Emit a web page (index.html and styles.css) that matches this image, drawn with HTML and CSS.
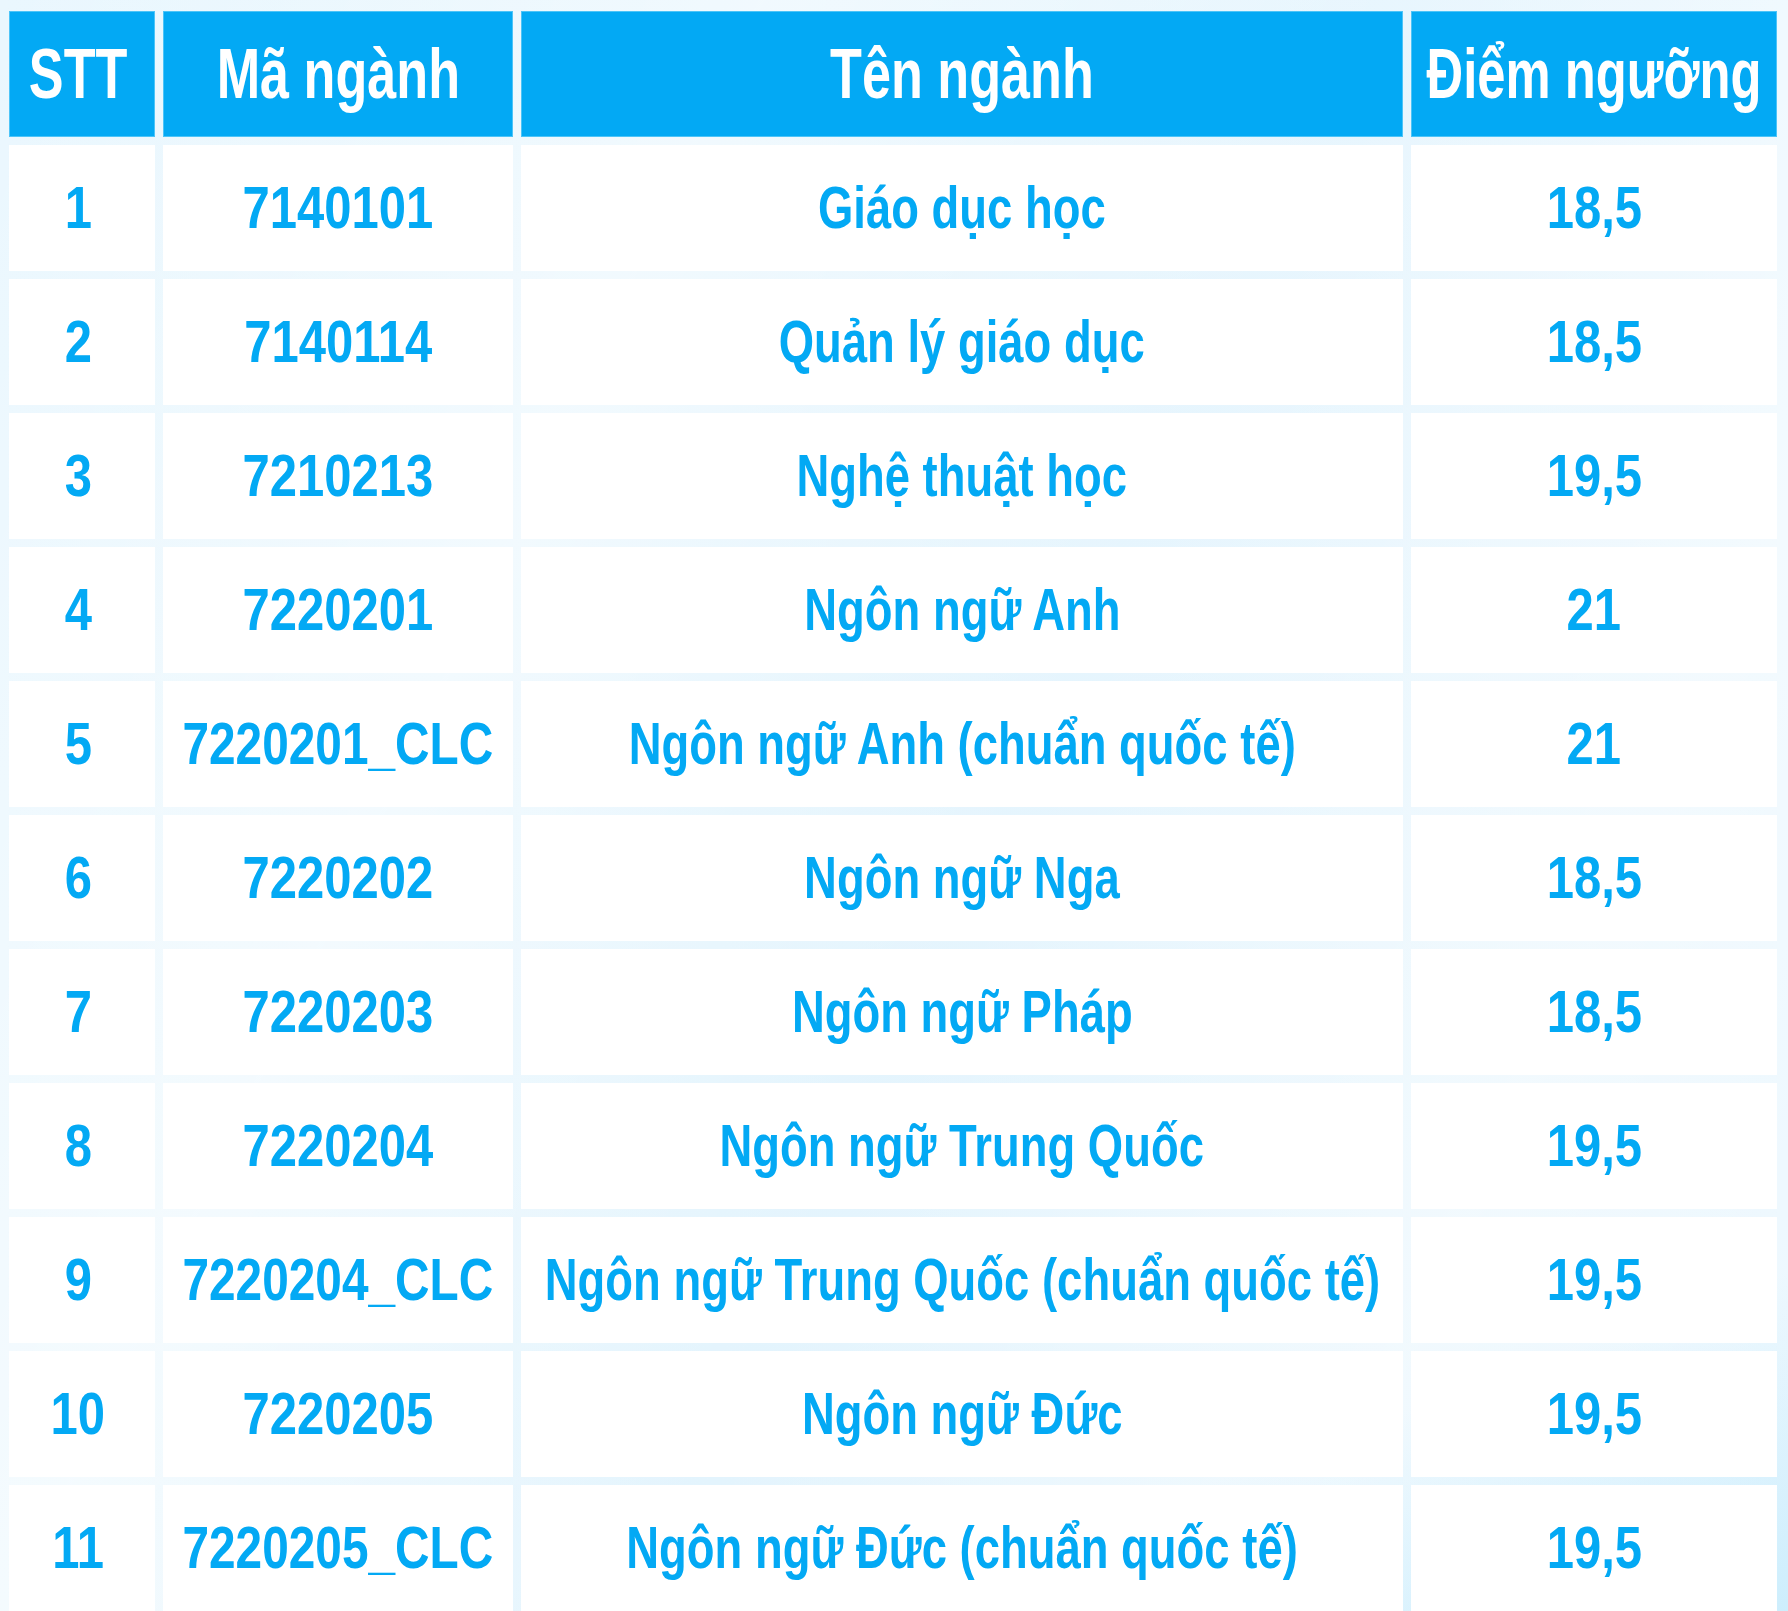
FILE: index.html
```html
<!DOCTYPE html>
<html lang="vi">
<head>
<meta charset="utf-8">
<title>Điểm ngưỡng</title>
<link rel="stylesheet" href="styles.css">
</head>
<body>
<div class="page">
  <div class="grid">
    <div class="cell head stt"><span>STT</span></div>
    <div class="cell head"><span>Mã ngành</span></div>
    <div class="cell head"><span>Tên ngành</span></div>
    <div class="cell head narrow"><span>Điểm ngưỡng</span></div>

    <div class="cell num stt"><span>1</span></div><div class="cell num"><span>7140101</span></div><div class="cell name"><span>Giáo dục học</span></div><div class="cell num"><span>18,5</span></div>
    <div class="cell num stt"><span>2</span></div><div class="cell num"><span>7140114</span></div><div class="cell name"><span>Quản lý giáo dục</span></div><div class="cell num"><span>18,5</span></div>
    <div class="cell num stt"><span>3</span></div><div class="cell num"><span>7210213</span></div><div class="cell name"><span>Nghệ thuật học</span></div><div class="cell num"><span>19,5</span></div>
    <div class="cell num stt"><span>4</span></div><div class="cell num"><span>7220201</span></div><div class="cell name"><span>Ngôn ngữ Anh</span></div><div class="cell num"><span>21</span></div>
    <div class="cell num stt"><span>5</span></div><div class="cell num clc"><span>7220201_CLC</span></div><div class="cell name"><span>Ngôn ngữ Anh (chuẩn quốc tế)</span></div><div class="cell num"><span>21</span></div>
    <div class="cell num stt"><span>6</span></div><div class="cell num"><span>7220202</span></div><div class="cell name"><span>Ngôn ngữ Nga</span></div><div class="cell num"><span>18,5</span></div>
    <div class="cell num stt"><span>7</span></div><div class="cell num"><span>7220203</span></div><div class="cell name"><span>Ngôn ngữ Pháp</span></div><div class="cell num"><span>18,5</span></div>
    <div class="cell num stt"><span>8</span></div><div class="cell num"><span>7220204</span></div><div class="cell name"><span>Ngôn ngữ Trung Quốc</span></div><div class="cell num"><span>19,5</span></div>
    <div class="cell num stt"><span>9</span></div><div class="cell num clc"><span>7220204_CLC</span></div><div class="cell name"><span>Ngôn ngữ Trung Quốc (chuẩn quốc tế)</span></div><div class="cell num"><span>19,5</span></div>
    <div class="cell num stt"><span>10</span></div><div class="cell num"><span>7220205</span></div><div class="cell name"><span>Ngôn ngữ Đức</span></div><div class="cell num"><span>19,5</span></div>
    <div class="cell num stt"><span>11</span></div><div class="cell num clc"><span>7220205_CLC</span></div><div class="cell name"><span>Ngôn ngữ Đức (chuẩn quốc tế)</span></div><div class="cell num"><span>19,5</span></div>
  </div>
</div>
</body>
</html>
```
FILE: styles.css
```css
html, body {
  margin: 0;
  padding: 0;
}
body {
  width: 1788px;
  height: 1611px;
  overflow: hidden;
  background: #e9f6fe;
}
.page {
  width: 1788px;
  height: 1611px;
  overflow: hidden;
  box-sizing: border-box;
  padding: 11px 0 0 9px;
  background:
    linear-gradient(160deg, rgba(205,238,253,0) 85%, rgba(205,238,253,1) 100%),
    linear-gradient(115deg, rgba(255,255,255,0) 0%, rgba(255,255,255,0.5) 30%, rgba(255,255,255,0) 55%, rgba(255,255,255,0.4) 80%, rgba(255,255,255,0) 100%),
    linear-gradient(90deg, #eaf7fe 0%, #e3f4fd 40%, #ebf7fe 100%);
}
.grid {
  display: grid;
  grid-template-columns: 146px 350px 882px 366px;
  grid-auto-rows: 126px;
  column-gap: 8px;
  row-gap: 8px;
  font-family: "Liberation Sans", Arial, sans-serif;
  font-weight: bold;
}
.cell {
  background: #ffffff;
  color: #03a9f4;
  font-size: 59px;
  display: flex;
  align-items: center;
  justify-content: center;
  white-space: nowrap;
  min-width: 0;
}
.cell span {
  display: inline-block;
  flex: none;
  transform-origin: center center;
}
.cell.num span {
  transform: scaleX(0.83);
}
.cell.num.clc span {
  transform: scaleX(0.81);
}
.cell.name span {
  transform: scaleX(0.77);
}
.cell.head {
  background: #03a9f4;
  color: #ffffff;
  font-size: 70px;
  box-shadow: inset 0 0 0 1px #4cc4f8;
}
.cell.head span {
  transform: scaleX(0.745);
}
.cell.head.narrow span {
  transform: scaleX(0.725);
}
.stt {
  padding-right: 8px;
}
```
